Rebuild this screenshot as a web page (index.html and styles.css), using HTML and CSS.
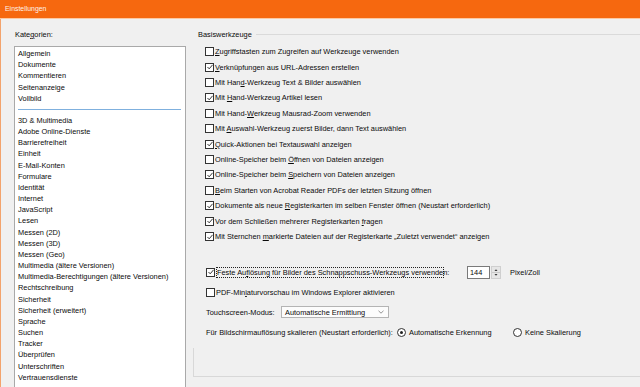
FILE: index.html
```html
<!DOCTYPE html>

<html>
    <head>
        <meta charset="utf-8">
        <link rel="stylesheet" href="styles.css">
    </head>

    <body>
        <div class="titlebar">Einstellungen</div>

        <div class="window">
            <div class="sidebar">
                <div class="caption">Kate<u>g</u>orien:</div>

                <div class="list">
                    <div class="item">Allgemein</div>
                    <div class="item">Dokumente</div>
                    <div class="item">Kommentieren</div>
                    <div class="item">Seitenanzeige</div>
                    <div class="item">Vollbild</div>
                    <div class="separator"></div>
                    <div class="item">3D &amp; Multimedia</div>
                    <div class="item">Adobe Online-Dienste</div>
                    <div class="item">Barrierefreiheit</div>
                    <div class="item">Einheit</div>
                    <div class="item">E-Mail-Konten</div>
                    <div class="item">Formulare</div>
                    <div class="item">Identität</div>
                    <div class="item">Internet</div>
                    <div class="item">JavaScript</div>
                    <div class="item">Lesen</div>
                    <div class="item">Messen (2D)</div>
                    <div class="item">Messen (3D)</div>
                    <div class="item">Messen (Geo)</div>
                    <div class="item">Multimedia (ältere Versionen)</div>
                    <div class="item">Multimedia-Berechtigungen (ältere Versionen)</div>
                    <div class="item">Rechtschreibung</div>
                    <div class="item">Sicherheit</div>
                    <div class="item">Sicherheit (erweitert)</div>
                    <div class="item">Sprache</div>
                    <div class="item">Suchen</div>
                    <div class="item">Tracker</div>
                    <div class="item">Überprüfen</div>
                    <div class="item">Unterschriften</div>
                    <div class="item">Vertrauensdienste</div>
                </div>
            </div>

            <div class="content">
                <div class="group-head">
                    <span class="group-title">Basiswerkzeuge</span>
                    <span class="group-line"></span>
                </div>

                <div class="options">
                    <div class="option">
                        <span class="check"></span>
                        <span><u>Z</u>ugriffstasten zum Zugreifen auf Werkzeuge verwenden</span>
                    </div>

                    <div class="option">
                        <span class="check"><svg width="6" height="6" viewBox="0 0 6 6"><polyline points="0.5,3 2.2,4.8 5.6,0.8" fill="none" stroke="#222" stroke-width="0.9"/></svg></span>
                        <span><u>V</u>erknüpfungen aus URL-Adressen erstellen</span>
                    </div>

                    <div class="option">
                        <span class="check"></span>
                        <span>Mit Han<u>d</u>-Werkzeug Text &amp; Bilder auswählen</span>
                    </div>

                    <div class="option">
                        <span class="check"><svg width="6" height="6" viewBox="0 0 6 6"><polyline points="0.5,3 2.2,4.8 5.6,0.8" fill="none" stroke="#222" stroke-width="0.9"/></svg></span>
                        <span>Mit <u>H</u>and-Werkzeug Artikel lesen</span>
                    </div>

                    <div class="option">
                        <span class="check"></span>
                        <span>Mit Hand-<u>W</u>erkzeug Mausrad-Zoom verwenden</span>
                    </div>

                    <div class="option">
                        <span class="check"></span>
                        <span>Mit <u>A</u>uswahl-Werkzeug zuerst Bilder, dann Text auswählen</span>
                    </div>

                    <div class="option">
                        <span class="check"><svg width="6" height="6" viewBox="0 0 6 6"><polyline points="0.5,3 2.2,4.8 5.6,0.8" fill="none" stroke="#222" stroke-width="0.9"/></svg></span>
                        <span><u>Q</u>uick-Aktionen bei Textauswahl anzeigen</span>
                    </div>

                    <div class="option">
                        <span class="check"></span>
                        <span>Online-Speicher beim <u>Ö</u>ffnen von Dateien anzeigen</span>
                    </div>

                    <div class="option">
                        <span class="check"><svg width="6" height="6" viewBox="0 0 6 6"><polyline points="0.5,3 2.2,4.8 5.6,0.8" fill="none" stroke="#222" stroke-width="0.9"/></svg></span>
                        <span>Online-Speicher beim <u>S</u>peichern von Dateien anzeigen</span>
                    </div>

                    <div class="option">
                        <span class="check"></span>
                        <span><u>B</u>eim Starten von Acrobat Reader PDFs der letzten Sitzung öffnen</span>
                    </div>

                    <div class="option">
                        <span class="check"><svg width="6" height="6" viewBox="0 0 6 6"><polyline points="0.5,3 2.2,4.8 5.6,0.8" fill="none" stroke="#222" stroke-width="0.9"/></svg></span>
                        <span>Dokumente als neue <u>R</u>egisterkarten im selben Fenster öffnen (Neustart erforderlich)</span>
                    </div>

                    <div class="option">
                        <span class="check"><svg width="6" height="6" viewBox="0 0 6 6"><polyline points="0.5,3 2.2,4.8 5.6,0.8" fill="none" stroke="#222" stroke-width="0.9"/></svg></span>
                        <span>Vor dem Schließen mehrerer Registerkarten <u>f</u>ragen</span>
                    </div>

                    <div class="option">
                        <span class="check"><svg width="6" height="6" viewBox="0 0 6 6"><polyline points="0.5,3 2.2,4.8 5.6,0.8" fill="none" stroke="#222" stroke-width="0.9"/></svg></span>
                        <span>Mit Sternchen <u>m</u>arkierte Dateien auf der Registerkarte „Zuletzt verwendet“ anzeigen</span>
                    </div>
                </div>

                <div class="settings">
                    <div class="setting">
                        <span class="check"><svg width="6" height="6" viewBox="0 0 6 6"><polyline points="0.5,3 2.2,4.8 5.6,0.8" fill="none" stroke="#222" stroke-width="0.9"/></svg></span>
                        <span class="focus-label">Feste Au<u>f</u>lösung für Bilder des Schnappschuss-Werkzeugs verwenden:</span>

                        <div class="spin">
                            <div class="spin-value">144</div>
                            <div class="spin-buttons">
                                <svg width="8" height="11" viewBox="0 0 8 11"><polygon points="2.5,4 5.5,4 4,2.3" fill="#333"/><polygon points="2.5,7 5.5,7 4,8.7" fill="#333"/><line x1="0" y1="5.5" x2="8" y2="5.5" stroke="#c9c9c9" stroke-width="1"/></svg>
                            </div>
                        </div>

                        <span class="unit">Pixel/Zoll</span>
                    </div>

                    <div class="setting">
                        <span class="check"></span>
                        <span>PDF-Min<u>i</u>aturvorschau im Windows Explorer aktivieren</span>
                    </div>

                    <div class="setting">
                        <span class="setting-label touch-label">Touchscreen-Modus:</span>

                        <div class="dropdown">
                            <span>Automatische Ermittlung</span>
                            <svg width="6" height="4" viewBox="0 0 6 4"><polyline points="0.5,0.8 3,3.2 5.5,0.8" fill="none" stroke="#777" stroke-width="0.8"/></svg>
                        </div>
                    </div>

                    <div class="setting">
                        <span class="setting-label scale-label">Für Bildschirmauflösung skalieren (Neustart erforderlich):</span>

                        <span class="radio-option first-radio">
                            <span class="radio selected"></span>
                            <span>Automatische Erkennung</span>
                        </span>

                        <span class="radio-option">
                            <span class="radio"></span>
                            <span>Keine Skalierung</span>
                        </span>
                    </div>
                </div>

                <div class="panel"></div>
            </div>
        </div>
    </body>
</html>
```

FILE: styles.css
```css
body
{
    margin: 0;
    width: 640px;
    height: 387px;
    overflow: hidden;
    background-color: #f0f0f0;
    font-family: "Liberation Sans", Arial, sans-serif;
    font-size: 7.4px;
    color: #0a0a0a;
}

.titlebar
{
    height: 18px;
    line-height: 18px;
    padding-left: 5px;
    background-color: #f6680f;
    border-bottom: 1px solid #fcc9a3;
    color: #fff3ea;
    font-size: 6.9px;
}

.window
{
    display: flex;
    height: 368px;
    overflow: hidden;
    border-left: 1px solid #f3a36c;
}

.sidebar
{
    width: 179px;
    flex: none;
    padding-left: 13px;
    padding-top: 10px;
}

.caption
{
    line-height: 11px;
    padding-left: 1px;
}

.list
{
    margin-top: 6px;
    width: 167px;
    height: 340px;
    padding: 1px 0 0 3px;
    background-color: #fff;
    border: 1px solid #a9a9a9;
    border-bottom: none;
}

.item
{
    line-height: 11.17px;
    white-space: nowrap;
}

.separator
{
    height: 1px;
    width: 163px;
    margin: 5px 0 5px 0;
    background-color: #7fb0de;
}

.content
{
    flex: 1;
    padding-top: 10px;
}

.group-head
{
    display: flex;
    align-items: center;
    height: 11px;
    padding-left: 5px;
}

.group-title
{
    line-height: 11px;
}

.group-line
{
    flex: 1;
    height: 1px;
    margin-left: 4px;
    background-color: #dadada;
}

.options
{
    margin-top: 4px;
    padding-left: 12px;
}

.option
{
    display: flex;
    align-items: center;
    height: 15.42px;
    white-space: nowrap;
}

.check
{
    display: flex;
    align-items: center;
    justify-content: center;
    width: 7px;
    height: 7px;
    margin-right: 1px;
    flex: none;
    background-color: #fff;
    border: 1px solid #333;
}

.settings
{
    margin-top: 18px;
    padding-left: 13px;
}

.setting
{
    display: flex;
    align-items: center;
    height: 20px;
    white-space: nowrap;
}

.focus-label
{
    width: 226px;
    line-height: 9px;
    border: 1px dotted #222;
}

.spin
{
    display: flex;
    height: 13px;
    margin-left: 23px;
}

.spin-value
{
    width: 19px;
    line-height: 11px;
    padding-left: 2px;
    background-color: #fff;
    border: 1px solid #7a7a7a;
}

.spin-buttons
{
    display: flex;
    width: 8px;
    margin-left: 1px;
    background-color: #e6e6e6;
    border: 1px solid #cfcfcf;
}

.unit
{
    margin-left: 9px;
}

.setting-label
{
    flex: none;
}

.touch-label
{
    width: 75px;
}

.scale-label
{
    width: 191px;
}

.dropdown
{
    display: flex;
    align-items: center;
    justify-content: space-between;
    width: 99px;
    height: 10px;
    padding: 0 4px 0 3px;
    background-color: #fcfcfc;
    border: 1px solid #b4b4b4;
}

.radio-option
{
    display: flex;
    align-items: center;
}

.first-radio
{
    width: 116px;
}

.radio
{
    display: flex;
    align-items: center;
    justify-content: center;
    width: 7px;
    height: 7px;
    margin-right: 3px;
    border: 1px solid #333;
    border-radius: 50%;
    background-color: #fff;
}

.radio.selected::after
{
    content: "";
    width: 3px;
    height: 3px;
    border-radius: 50%;
    background-color: #222;
}

.panel
{
    margin-top: 6px;
    height: 28px;
    border-left: 1px solid #d8d8d8;
    border-bottom: 1px solid #d8d8d8;
}
```
